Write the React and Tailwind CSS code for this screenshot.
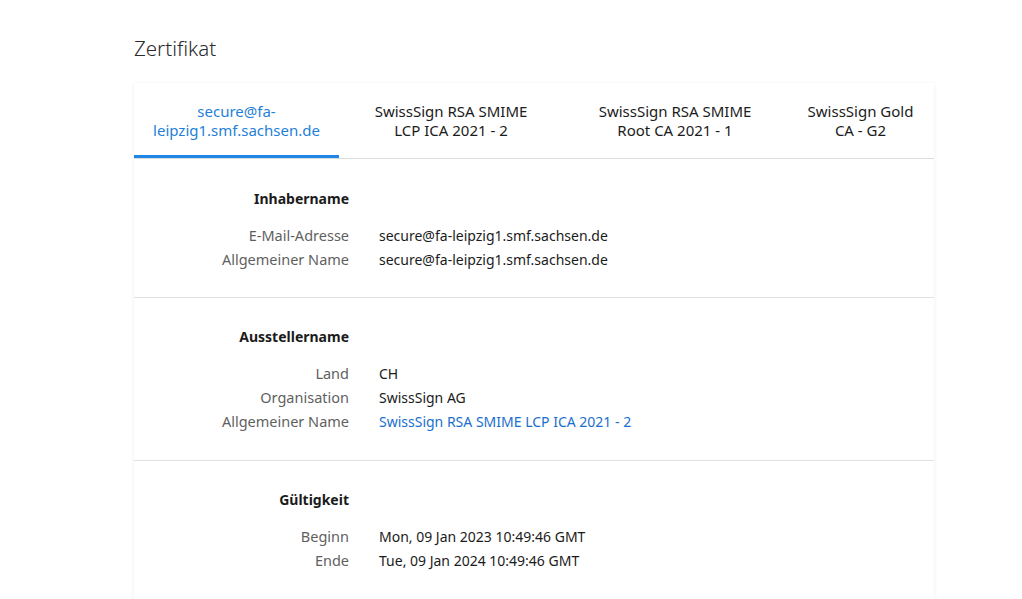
import { useState } from "react";

const tabs = [
  { id: "leaf", label: "secure@fa-leipzig1.smf.sachsen.de", cls: "w-[205px] px-[18px]" },
  { id: "ica", label: "SwissSign RSA SMIME LCP ICA 2021 - 2", cls: "w-[224px] px-[30px]" },
  { id: "root", label: "SwissSign RSA SMIME Root CA 2021 - 1", cls: "w-[224px] px-[30px]" },
  { id: "gold", label: "SwissSign Gold CA - G2", cls: "w-[147px] px-[18px]" },
];

const sections = [
  {
    title: "Inhabername",
    rows: [
      ["E-Mail-Adresse", "secure@fa-leipzig1.smf.sachsen.de"],
      ["Allgemeiner Name", "secure@fa-leipzig1.smf.sachsen.de"],
    ],
  },
  {
    title: "Ausstellername",
    rows: [
      ["Land", "CH"],
      ["Organisation", "SwissSign AG"],
      ["Allgemeiner Name", "SwissSign RSA SMIME LCP ICA 2021 - 2", true],
    ],
  },
  {
    title: "Gültigkeit",
    rows: [
      ["Beginn", "Mon, 09 Jan 2023 10:49:46 GMT"],
      ["Ende", "Tue, 09 Jan 2024 10:49:46 GMT"],
    ],
  },
];

function Section({ title, rows, first }) {
  return (
    <section
      className={
        first
          ? "pt-[27px] pb-[26px]"
          : "border-t border-[#e0e0e0] pt-[26px] pb-[27px]"
      }
    >
      <div className="flex h-[24px] items-center">
        <h3 className="w-[215px] text-right text-[14px] font-bold text-[#1b1b1b]">
          {title}
        </h3>
      </div>
      <div className="mt-[13px]">
        {rows.map(([label, value, link]) => (
          <div key={label} className="flex h-[24px] items-baseline leading-[24px]">
            <span className="w-[215px] text-right text-[14.5px] text-[#5f5f5f]">
              {label}
            </span>
            <span
              className={
                "ml-[30px] text-[14px] " +
                (link ? "text-[#1a6fce]" : "text-[#1b1b1b]")
              }
            >
              {value}
            </span>
          </div>
        ))}
      </div>
    </section>
  );
}

export default function App() {
  const [active, setActive] = useState("leaf");

  return (
    <div className="h-[599px] overflow-hidden bg-white font-['Noto_Sans','Open_Sans',sans-serif]">
      <div className="ml-[134px] w-[800px]">
        <h1 className="pt-[33px] text-[20.5px] font-light leading-[30px] text-[#2b2b2b]">
          Zertifikat
        </h1>

        <div className="mt-[20px] bg-white shadow-[0_1px_4px_rgba(0,0,0,0.08)]">
          <div className="flex border-b border-[#dcdcdc]">
            {tabs.map((tab) => (
              <button
                key={tab.id}
                onClick={() => setActive(tab.id)}
                className={
                  tab.cls +
                  " flex h-[75px] items-center justify-center border-b-[3px] pt-[4px] text-center text-[15px] leading-[19px] " +
                  (active === tab.id
                    ? "border-[#1f86e6] text-[#1f7fd8]"
                    : "border-transparent text-[#1b1b1b]")
                }
              >
                {tab.label}
              </button>
            ))}
          </div>

          {sections.map((s, i) => (
            <Section key={s.title} {...s} first={i === 0} />
          ))}
        </div>
      </div>
    </div>
  );
}
